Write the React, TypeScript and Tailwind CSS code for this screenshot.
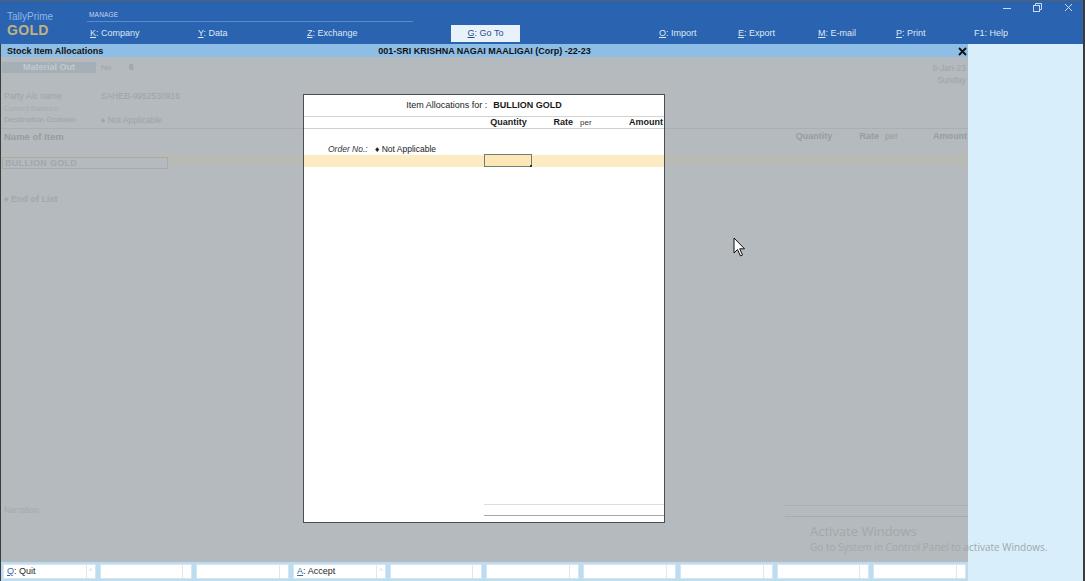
import React from "react";

const F = { fontFamily: '"Liberation Sans", Arial, sans-serif' };

function MenuItem({ k, label, w }: { k: string; label: string; w: string }) {
  return (
    <div className={`${w} text-[9px] text-[#dde9f7] whitespace-nowrap`}>
      <span className="underline underline-offset-[1px]">{k}</span>
      <span>: {label}</span>
    </div>
  );
}

function BottomBtn({ k, label, caret }: { k?: string; label?: string; caret?: boolean }) {
  return (
    <div className="h-[15px] bg-white border border-[#d4e6f2] flex items-center">
      <div className="flex-1 pl-[3px] text-[9px] text-[#1e1e1e] whitespace-nowrap leading-[13px]">
        {k && (
          <>
            <span className="underline text-[#3a66a8]">{k}</span>
            <span>: {label}</span>
          </>
        )}
      </div>
      <div className="w-[9px] h-full border-l border-[#e3e7ea] flex items-center justify-center text-[7px] text-[#c9cdd0]">
        {caret ? "^" : ""}
      </div>
    </div>
  );
}

export default function App() {
  return (
    <div
      style={F}
      className="w-[1085px] h-[581px] overflow-hidden flex flex-col bg-[#d8eefa] border-r-2 border-[#3c3c3c] relative"
    >
      {/* Header */}
      <div className="h-[44px] bg-[#2a63b0] flex border-t border-[#55606e] relative shrink-0">
        <div className="w-[87px] pl-[7px] pt-[10px]">
          <div className="text-[10px] text-[#8fb6e6] leading-[12px]">TallyPrime</div>
          <div className="text-[14px] font-bold text-[#c2b27f] leading-[14px] tracking-[0.3px]">GOLD</div>
        </div>
        <div className="flex flex-col">
          <div className="h-[21px] w-[326px] border-b border-[#5b8bcb] pl-[2px] pt-[10px] text-[6.5px] leading-[8px] text-[#c6d7ee] tracking-[0.2px]">
            MANAGE
          </div>
          <div className="h-[22px] flex items-center pt-[1px]">
            <div className="w-[3px]" />
            <MenuItem k="K" label="Company" w="w-[108px]" />
            <MenuItem k="Y" label="Data" w="w-[109px]" />
            <MenuItem k="Z" label="Exchange" w="w-[144px]" />
            <div className="w-[69px] h-[17px] bg-[#e9f2fb] flex items-center justify-center text-[9px] text-[#2a4f86] whitespace-nowrap">
              <span className="underline">G</span>
              <span>: Go To</span>
            </div>
            <div className="w-[139px]" />
            <MenuItem k="O" label="Import" w="w-[79px]" />
            <MenuItem k="E" label="Export" w="w-[80px]" />
            <MenuItem k="M" label="E-mail" w="w-[78px]" />
            <MenuItem k="P" label="Print" w="w-[78px]" />
            <div className="text-[9px] text-[#dde9f7] whitespace-nowrap">F1: Help</div>
          </div>
        </div>
        {/* window controls */}
        <div className="absolute right-[10px] top-[2px] flex items-center gap-[22px] text-[#c9dbf1]">
          <div className="w-[8px] h-[1px] bg-[#c9dbf1] mt-[1px]" />
          <svg width="9" height="9" viewBox="0 0 9 9">
            <rect x="0.5" y="2.5" width="6" height="6" fill="none" stroke="#c9dbf1" />
            <path d="M2.5 2.5V0.5H8.5V6.5H6.5" fill="none" stroke="#c9dbf1" />
          </svg>
          <svg width="9" height="9" viewBox="0 0 9 9">
            <path d="M1 1L8 8M8 1L1 8" stroke="#c9dbf1" strokeWidth="1" />
          </svg>
        </div>
      </div>

      <div className="flex flex-1 min-h-0">
        {/* Left work area */}
        <div className="w-[968px] flex flex-col border-l border-[#3c3c3c]">
          {/* title bar */}
          <div className="h-[13px] bg-[#8ebde5] grid grid-cols-[1fr_auto_1fr] items-center text-[9px] font-bold text-[#111] leading-[13px] pt-[1px]">
            <div className="pl-[6px]">Stock Item Allocations</div>
            <div>001-SRI KRISHNA NAGAI MAALIGAI (Corp) -22-23</div>
            <div className="flex justify-end pr-[1px]">
              <svg width="9" height="9" viewBox="0 0 9 9">
                <path d="M1 1L8 8M8 1L1 8" stroke="#111" strokeWidth="1.8" />
              </svg>
            </div>
          </div>

          {/* main dimmed area */}
          <div className="h-[505px] bg-[#b4babd] relative flex flex-col text-[#9ea4a8]">
            {/* row 1 */}
            <div className="mt-[5px] h-[24px] flex justify-between pr-[2px]">
              <div className="flex h-[11px] items-center">
                <div className="ml-[1px] w-[94px] h-[11px] bg-[#a5afb6] text-[#c2c9ce] font-bold text-[9px] leading-[11px] text-center">
                  Material Out
                </div>
                <div className="ml-[5px] w-[28px] text-[8px]">No.</div>
                <div className="text-[8.5px] font-bold text-[#9aa0a4]">6</div>
              </div>
              <div className="text-right text-[8.5px] leading-[12px]">
                <div>8-Jan-23</div>
                <div>Sunday</div>
              </div>
            </div>
            <div className="mt-[5px] h-[10px] flex items-center text-[8.5px] leading-[10px] pl-[3px]">
              <div className="w-[97px]">Party A/c name</div>
              <div>SAHEB-9952530916</div>
            </div>
            <div className="mt-[3px] h-[10px] text-[7.5px] leading-[10px] pl-[3px] text-[#a6acb0]">Current Balance</div>
            <div className="mt-[1px] h-[10px] flex items-center text-[8.5px] leading-[10px] pl-[3px]">
              <div className="w-[97px] text-[8px]">Destination Godown</div>
              <div>♦ Not Applicable</div>
            </div>
            <div className="mt-[3px] h-[1px] bg-[#a9afb3]" />
            <div className="mt-[2px] h-[11px] flex items-center text-[9px] font-bold leading-[11px] text-[#979da1]">
              <div className="flex-1 pl-[3px] text-[9.5px]">Name of Item</div>
              <div className="w-[50px] text-center">Quantity</div>
              <div className="w-[40px] text-right">Rate</div>
              <div className="w-[33px] pl-[6px] font-normal">per</div>
              <div className="w-[56px] text-right pr-[1px]">Amount</div>
            </div>
            <div className="mt-[12px] h-[12px] flex bg-[#b7bbb4]">
              <div className="ml-[1px] mt-[3px] w-[166px] h-[12px] border border-[#a5abae] bg-[#b4babd] text-[9px] leading-[10px] pl-[2px] text-[#a2a8ab] font-bold tracking-[0.3px]">
                BULLION GOLD
              </div>
            </div>
            <div className="mt-[28px] h-[11px] text-[9px] font-bold leading-[11px] pl-[3px] text-[#a2a8ab]">♦ End of List</div>
            <div className="mt-[300px] flex justify-between items-start">
              <div className="text-[8.5px] pl-[3px] leading-[10px] text-[#a4aaad]">Narration:</div>
              <div className="w-[183px] mt-[0px]">
                <div className="h-[1px] bg-[#a9afb2]" />
                <div className="mt-[10px] h-[1px] bg-[#a5abae]" />
              </div>
            </div>

            {/* Modal */}
            <div className="absolute left-[302px] top-[37px] w-[362px] h-[429px] bg-white border border-[#4d4d4d] text-[#1a1a1a] flex flex-col">
              <div className="h-[22px] border-b border-[#d3d3d3] flex items-center justify-center text-[9px] whitespace-nowrap pt-[1px]">
                <span>Item Allocations for :</span>
                <span className="ml-[6px] font-bold">BULLION GOLD</span>
              </div>
              <div className="h-[12px] border-b border-[#cfcfcf] flex items-center text-[9px] leading-[11px]">
                <div className="w-[181px]" />
                <div className="w-[47px] text-center font-bold">Quantity</div>
                <div className="w-[41px] text-right font-bold">Rate</div>
                <div className="w-[35px] pl-[7px] text-[8px] text-[#333]">per</div>
                <div className="flex-1 text-right font-bold pr-[1px]">Amount</div>
              </div>
              <div className="mt-[15px] h-[11px] flex items-center text-[8.5px] leading-[11px]">
                <div className="w-[71px] pl-[24px] italic text-[#333] whitespace-nowrap">Order No.:</div>
                <div className="whitespace-nowrap">♦ Not Applicable</div>
              </div>
              <div className="h-[12px] bg-[#fdebc3] flex">
                <div className="w-[180px]" />
                <div className="w-[48px] h-[13px] -mt-[1px] border border-[#6f7f72] bg-[#fde7b6] relative">
                  <div className="absolute right-[-1px] bottom-[-1px] w-[2px] h-[2px] bg-[#333]" />
                </div>
              </div>
              <div className="flex-1" />
              <div className="ml-[180px] h-[1px] bg-[#dedede]" />
              <div className="ml-[180px] mt-[10px] h-[1px] bg-[#a8a8a8]" />
              <div className="h-[6px]" />
            </div>

            {/* mouse cursor */}
            <svg
              className="absolute left-[732px] top-[180px]"
              width="14"
              height="21"
              viewBox="0 0 14 21"
            >
              <path
                d="M1 1 L1 16 L4.5 12.5 L7.5 19 L9.5 18 L6.7 11.8 L11.5 11.8 Z"
                fill="#ffffff"
                stroke="#111"
                strokeWidth="1"
                strokeLinejoin="miter"
              />
            </svg>
          </div>

          {/* bottom bar */}
          <div className="flex-1 bg-[#bddcf0] grid grid-cols-10 gap-[4px] px-[2px] items-center">
            <BottomBtn k="Q" label="Quit" caret />
            <BottomBtn />
            <BottomBtn />
            <BottomBtn k="A" label="Accept" caret />
            <BottomBtn />
            <BottomBtn />
            <BottomBtn />
            <BottomBtn />
            <BottomBtn />
            <BottomBtn />
          </div>
        </div>
        {/* right panel */}
        <div className="flex-1 bg-[#d8eefa]" />
      </div>

      {/* Activate Windows watermark */}
      <div
        className="absolute left-[810px] top-[523px] pointer-events-none text-[#a2a8ab]"
        style={{ fontFamily: '"Open Sans", "Noto Sans", sans-serif' }}
      >
        <div className="text-[13px] leading-[17px]">Activate Windows</div>
        <div className="text-[10px] leading-[14px] whitespace-nowrap">Go to System in Control Panel to activate Windows.</div>
      </div>
    </div>
  );
}
